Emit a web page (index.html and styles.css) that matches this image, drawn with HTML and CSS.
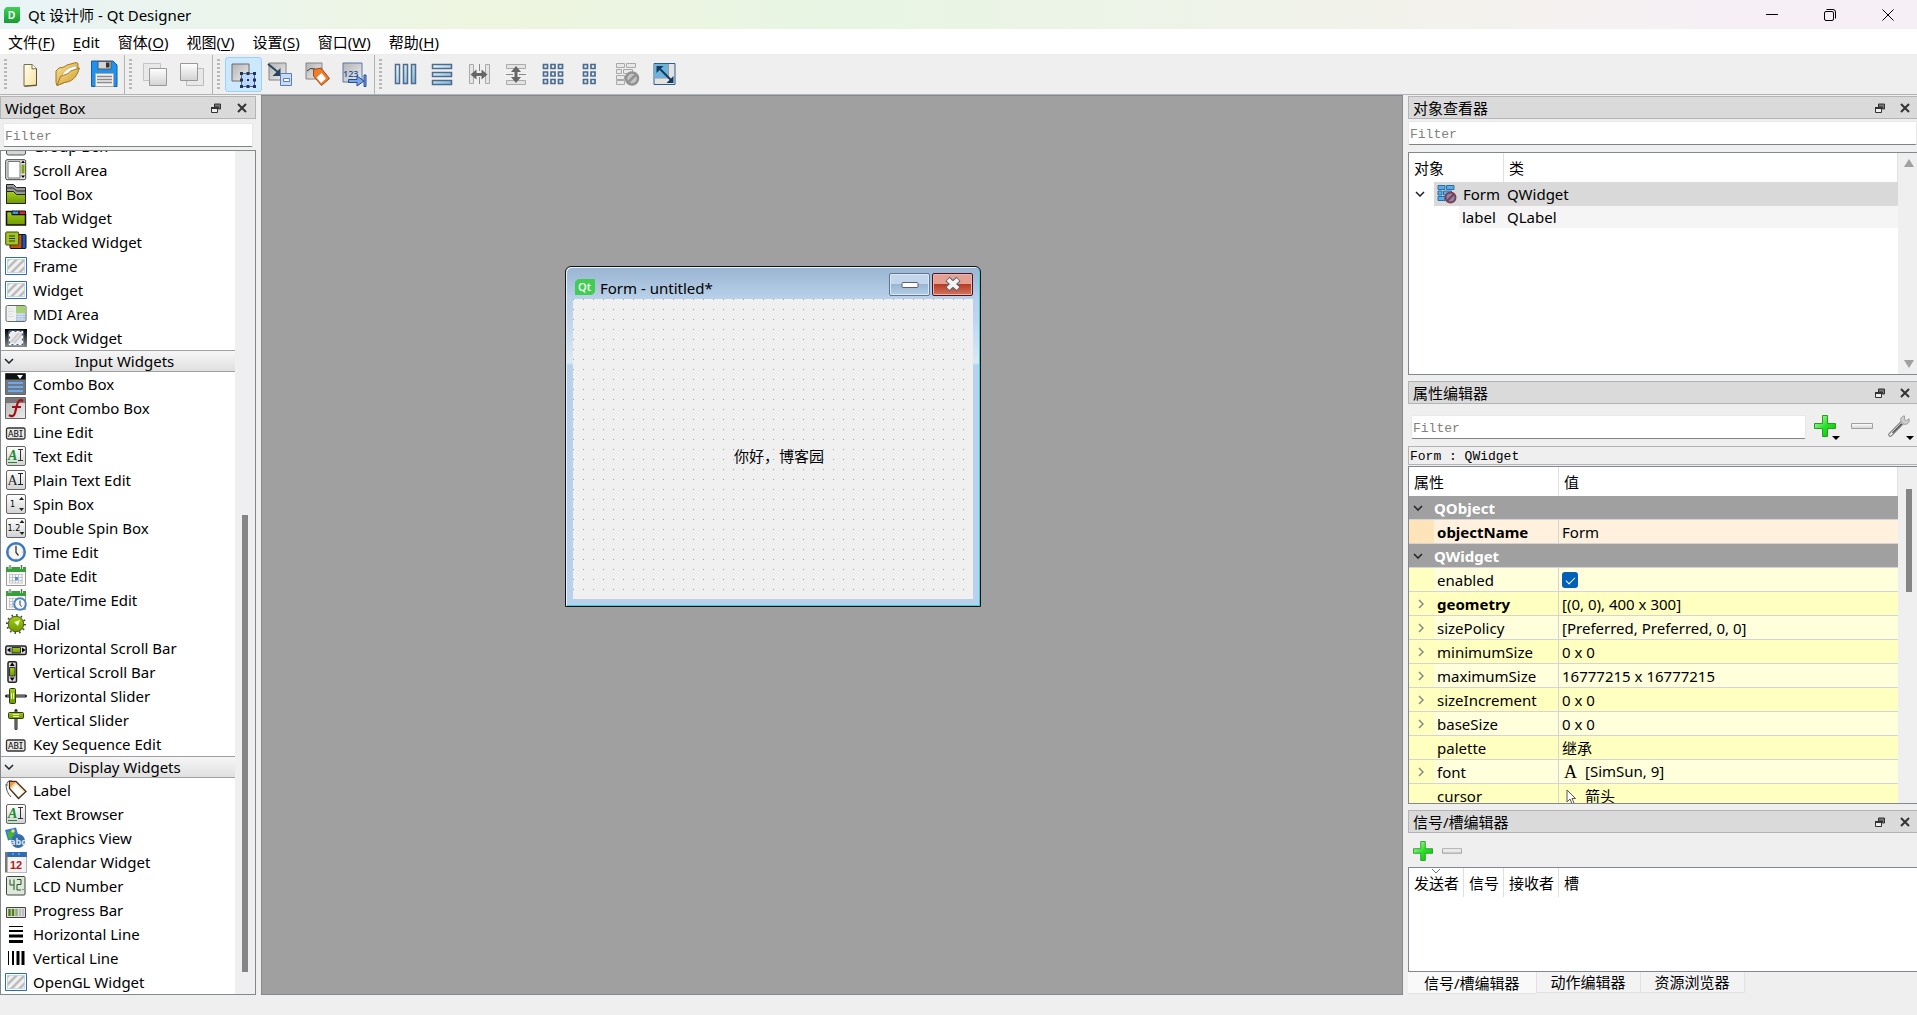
FILE: index.html
```html
<!DOCTYPE html>
<html lang="zh-CN">

<head>
  <meta charset="UTF-8">
  <meta name="viewport" content="width=device-width, initial-scale=1.0">
  <title>Qt 设计师 - Qt Designer</title>
  <link rel="stylesheet" href="styles.css">
</head>

<body>
  <!-- icon fills -->
  <svg class="paints" aria-hidden="true">
    <defs>
      <linearGradient id="g-grey" x1="0" y1="0" x2="1" y2="1"><stop offset="0" stop-color="#b4b4b4"/><stop offset="1" stop-color="#ededed"/></linearGradient>
      <linearGradient id="g-light" x1="0" y1="0" x2="0" y2="1"><stop offset="0" stop-color="#fff"/><stop offset="1" stop-color="#d2d2d2"/></linearGradient>
      <linearGradient id="g-blue" x1="0" y1="0" x2="1" y2="1"><stop offset="0" stop-color="#eef9ff"/><stop offset="1" stop-color="#7db9dc"/></linearGradient>
      <linearGradient id="g-green" x1="0" y1="0" x2="0" y2="1"><stop offset="0" stop-color="#a4cc1c"/><stop offset="1" stop-color="#6f9a00"/></linearGradient>
      <linearGradient id="g-plus" x1="0" y1="0" x2="1" y2="1"><stop offset="0" stop-color="#d4ffc8"/><stop offset=".5" stop-color="#2be02b"/><stop offset="1" stop-color="#00c400"/></linearGradient>
      <linearGradient id="g-page" x1="0" y1="0" x2="1" y2="1"><stop offset="0" stop-color="#fffef2"/><stop offset="1" stop-color="#f4e39b"/></linearGradient>
      <linearGradient id="g-gold" x1="0" y1="0" x2="1" y2="1"><stop offset="0" stop-color="#fce497"/><stop offset="1" stop-color="#c99422"/></linearGradient>
      <linearGradient id="g-logo" x1="0" y1="0" x2="0" y2="1"><stop offset="0" stop-color="#3fd058"/><stop offset="1" stop-color="#189a30"/></linearGradient>
      <linearGradient id="g-dark" x1="0" y1="0" x2="0" y2="1"><stop offset="0" stop-color="#000"/><stop offset="1" stop-color="#888"/></linearGradient>
      <pattern id="p-stripe" width="8" height="8" patternUnits="userSpaceOnUse"><rect width="8" height="8" fill="#f1f1f1"/><path d="M-2 10L10-2M-6 6L6-6M2 14L14 2" stroke="#bdbdbd" stroke-width="2.600"/></pattern>
    </defs>
  </svg>

  <!-- icons -->
  <svg class="sprite" aria-hidden="true">
    <!-- tool bar, 28 x 28 -->
    <symbol id="t-new" viewBox="0 0 28 28"><path d="M8 4.500h8l4.500 4v16.500l-12.500 1z" fill="url(#g-page)" stroke="#7b6d48"/><path d="M16 4.500v4.500l4.500-.5" fill="#fff" stroke="#7b6d48"/><path d="M20.500 9v16.500l-12 .8" fill="none" stroke="#5b4f32"/></symbol>
    <symbol id="t-open" viewBox="0 0 28 28"><path d="M3 11l3-3 5-1 3-2 9-2.500 2 1v7l-9 10-12 5-1-3z" fill="url(#g-gold)" stroke="#a37820"/><path d="M9 16c2-6 8-9 14-10l1.500 5-8 8-8 3z" fill="#fff" stroke="#c9c0a4"/><path d="M4 25.500l3.500-9c4-2 8-2 10-5.500l9-3-2 5c-3 7-8 9-13 9.500z" fill="url(#g-gold)" stroke="#a37820"/></symbol>
    <symbol id="t-save" viewBox="0 0 28 28"><path d="M1.500 1h21.500l4 4v21.500h-25.500z" fill="#1c93f0" stroke="#1a5c9c"/><path d="M8 1.500h13v7.500h-13z" fill="#d4d4d4" stroke="#555"/><path d="M16 2.500h3.500v5h-3.500z" fill="#333"/><path d="M5.500 13.500h18v13h-18z" fill="#f2f2f2" stroke="#aaa"/><path d="M7 16.500h15M7 19.500h15M7 22.500h15" stroke="#8a8a8a" stroke-width="1.500"/></symbol>
    <symbol id="t-front" viewBox="0 0 28 28"><path d="M2.500 3.500h17v17h-17z" fill="#e8e8e8" stroke="#c4c4c4"/><path d="M8.500 8.500h17v17h-17z" fill="url(#g-light)" stroke="#999"/></symbol>
    <symbol id="t-back" viewBox="0 0 28 28"><path d="M8.500 8.500h17v17h-17z" fill="#e8e8e8" stroke="#bbb"/><path d="M2.500 3.500h17v17h-17z" fill="url(#g-light)" stroke="#999"/></symbol>
    <symbol id="t-widget" viewBox="0 0 28 28"><path d="M3 4h17v17h-17z" fill="url(#g-grey)" stroke="#6d6d6d"/><path d="M12.500 13.500h13v13h-13z" fill="#bcd6ff" stroke="#4a6fae"/><path d="M11 12h3v3h-3zM17.500 12h3v3h-3zM24 12h3v3h-3zM11 18.500h3v3h-3zM24 18.500h3v3h-3zM11 25h3v3h-3zM17.500 25h3v3h-3zM24 25h3v3h-3z" fill="#23344f"/><path d="M18 19h2v2h-2z" fill="#23344f"/></symbol>
    <symbol id="t-signal" viewBox="0 0 28 28"><path d="M3 3h17v17h-17z" fill="url(#g-grey)" stroke="#858585"/><path d="M2 4l11 9" stroke="#27465e" stroke-width="2"/><path d="M14.500 8v8h-8z" fill="#27465e"/><path d="M14.500 13.500h11v12h-11z" fill="#c5dcff" stroke="#5b7db3"/><path d="M17.500 18.500h6v3h-6z" fill="#fff" stroke="#5b7db3"/></symbol>
    <symbol id="t-buddy" viewBox="0 0 28 28"><path d="M3 3h16v16h-16z" fill="url(#g-grey)" stroke="#858585"/><path d="M4 11q3-4 8-2" fill="none" stroke="#333"/><path d="M10.500 9.500l7.500-1.500 8.500 10.500-8 7-8-9.500z" fill="#f27a2b" stroke="#9b4a18"/><path d="M18.500 13l4.500 5.500-5 4.500-4.500-5.500z" fill="#fff"/></symbol>
    <symbol id="t-tab" viewBox="0 0 28 28"><path d="M3 3h19v19h-19z" fill="url(#g-grey)" stroke="#5d77a8"/><text x="3" y="17" class="t-123">123</text><path d="M8.500 19.500h8.500v-3.500l7 5-7 5v-3.500h-8.500zM24 15h2v11.500h-2z" fill="#78a7ec" stroke="#264b90"/></symbol>
    <symbol id="t-hlay" viewBox="0 0 28 28"><path d="M4.500 4.500h4v19h-4zM12.500 4.500h4v19h-4zM20.500 4.500h4v19h-4z" fill="url(#g-blue)" stroke="#4e6a8c" stroke-width="1.500"/></symbol>
    <symbol id="t-vlay" viewBox="0 0 28 28"><path d="M4.500 4.500h19v4h-19zM4.500 12.500h19v4h-19zM4.500 20.500h19v4h-19z" fill="url(#g-blue)" stroke="#4e6a8c" stroke-width="1.500"/></symbol>
    <symbol id="t-hsplit" viewBox="0 0 28 28"><path d="M4.500 4.500h4v19h-4zM20.500 4.500h4v19h-4z" fill="#e4e4e4" stroke="#aaa"/><path d="M14.500 4v20" stroke="#888" stroke-dasharray="7 6"/><path d="M5.500 14.500l6-5v3.500h5v-3.500l6 5-6 5v-3.500h-5v3.500z" fill="#666"/></symbol>
    <symbol id="t-vsplit" viewBox="0 0 28 28"><path d="M4.500 4.500h19v4h-19zM4.500 20.500h19v4h-19z" fill="#e4e4e4" stroke="#aaa"/><path d="M4 14.500h20" stroke="#888" stroke-dasharray="7 6"/><path d="M14 6l5 6h-3.500v5h3.500l-5 6-5-6h3.500v-5h-3.500z" fill="#666"/></symbol>
    <symbol id="t-grid" viewBox="0 0 28 28"><path d="M4.500 4.500h4v4h-4zM12 4.500h4v4h-4zM19.500 4.500h4v4h-4zM4.500 12h4v4h-4zM12 12h4v4h-4zM19.500 12h4v4h-4zM4.500 19.500h4v4h-4zM12 19.500h4v4h-4zM19.500 19.500h4v4h-4z" fill="#d9f0fc" stroke="#4e6a8c" stroke-width="1.700"/></symbol>
    <symbol id="t-form" viewBox="0 0 28 28"><path d="M7.500 4.500h4v4h-4zM15 4.500h4v4h-4zM7.500 12h4v4h-4zM15 12h4v4h-4zM7.500 19.500h4v4h-4zM15 19.500h4v4h-4z" fill="#d9f0fc" stroke="#4e6a8c" stroke-width="1.700"/></symbol>
    <symbol id="t-break" viewBox="0 0 28 28"><path d="M3.500 3.500h8v4h-8zM13.500 3.500h9v4h-9zM3.500 9.500h5v4h-5zM10.500 9.500h9v4h-9zM3.500 15.500h8v4h-8zM3.500 20.500h8v4h-8z" fill="#e8e8e8" stroke="#a8a8a8"/><circle cx="19" cy="18.500" r="6" fill="#c4c4c4" stroke="#929292" stroke-width="2.500"/><path d="M15 22.500l8-8" stroke="#929292" stroke-width="2.500"/></symbol>
    <symbol id="t-adjust" viewBox="0 0 28 28"><path d="M4 3.500h21v21h-21z" fill="#e3e3e3" stroke="#2d5d8f"/><path d="M4.500 4h14v14h-14z" fill="#6db4dc"/><path d="M18.500 4v14h-14" fill="none" stroke="#99a"/><path d="M9 8l12 12" stroke="#123a5e" stroke-width="2"/><path d="M6.500 6h7l-7 7zM23.500 23h-7l7-7z" fill="#123a5e"/></symbol>

    <!-- panel controls -->
    <symbol id="c-float" viewBox="0 0 10 10"><path d="M3.500 1h6v5h-2v-2h-4z" fill="#777" stroke="#333"/><path d="M.5 4.500h6v5h-6z" fill="#eee" stroke="#333"/><path d="M0 4h7v2h-7z" fill="#333"/></symbol>
    <symbol id="c-close" viewBox="0 0 10 10"><path d="M1 1l8 8M9 1l-8 8" stroke="#333" stroke-width="2"/></symbol>
    <symbol id="c-down" viewBox="0 0 10 6"><path d="M1 1l4 4 4-4" fill="none" stroke="#222" stroke-width="1.500"/></symbol>
    <symbol id="c-right" viewBox="0 0 6 10"><path d="M1 1l4 4-4 4" fill="none" stroke="#888" stroke-width="1.500"/></symbol>
    <symbol id="c-plus" viewBox="0 0 22 22"><path d="M8.500.5h5v8h8v5h-8v8h-5v-8h-8v-5h8z" fill="url(#g-plus)" stroke="#2a9c22"/></symbol>
    <symbol id="c-minus" viewBox="0 0 22 22"><path d="M.5 8.500h21v5h-21z" fill="url(#g-light)" stroke="#a0a0a0"/></symbol>
    <symbol id="c-wrench" viewBox="0 0 24 24"><path d="M2.500 21.500L16 8" stroke="#777" stroke-width="4.500" stroke-linecap="round"/><path d="M2.500 21.500L16 8" stroke="#e8e8e8" stroke-width="2.500" stroke-linecap="round"/><path d="M5 19.500L15 9.500" stroke="#444" stroke-width="1.500"/><path d="M14 7c-1-3 1-6 4-6v4l2 1 3-2c1 4-2 7-6 6z" fill="#ccc" stroke="#999"/></symbol>

    <!-- widget box, 22 x 22 -->
    <symbol id="w-group" viewBox="0 0 22 22"><rect x="1.500" y="3" width="19" height="17" rx="2" fill="#d5d5d5" stroke="#555"/></symbol>
    <symbol id="w-scroll" viewBox="0 0 22 22"><rect x=".7" y=".7" width="20" height="20" rx="1.500" fill="#e7e7e7" stroke="#444"/><path d="M3 2.500h12v16.500h-12z" fill="#fff" stroke="#777"/><path d="M16.500 5.500h3v9h-3z" fill="#7da50a"/><path d="M16 4h4l-2-2.500zM16 16.500h4l-2 2.500z"/></symbol>
    <symbol id="w-toolbox" viewBox="0 0 22 22"><path d="M1.500 1.500h7l3 3h9v16h-19z" fill="#9a9a9a" stroke="#222"/><path d="M1.500 5h7l3 3h9" fill="none" stroke="#222"/><path d="M1.500 8.500h7l3 3h9v9h-19z" fill="url(#g-green)" stroke="#222"/></symbol>
    <symbol id="w-tab" viewBox="0 0 22 22"><path d="M1.500 4.500h6v3h13v10.500h-19z" fill="url(#g-green)" stroke="#111" stroke-width="1.500"/><path d="M7 4h7v3.500h-7z" fill="#3a9ae8" stroke="#111"/><path d="M14 4h6.500v3.500h-6.500z" fill="#e02a1a" stroke="#111"/></symbol>
    <symbol id="w-stack" viewBox="0 0 22 22"><rect x="9" y="3.500" width="12" height="14" rx="1" fill="#1c57c0" stroke="#111"/><rect x="5" y="3.500" width="12" height="14" rx="1" fill="#c4531a" stroke="#111"/><rect x=".7" y="1" width="13" height="13" rx="1" fill="#a3c32a" stroke="#3b4a00"/><path d="M4 5h6M4 7.500h6M4 10h6" stroke="#274000"/></symbol>
    <symbol id="w-frame" viewBox="0 0 22 22"><path d="M.5 2.500h21v17h-21z" fill="#fff" stroke="#2b6cc0"/><path d="M2.500 4.500h17v13h-17z" fill="url(#p-stripe)" stroke="#9abce0" stroke-width=".5"/></symbol>
    <symbol id="w-mdi" viewBox="0 0 22 22"><rect x="1" y="2.500" width="20" height="16" rx="1.500" fill="#f0f0f0" stroke="#666"/><path d="M11 3h9.500v7.500h-9.500z" fill="#a5cf7b"/><path d="M11 11.500h9v6.500h-9z" fill="#9bc3ff"/><path d="M11 13.500h9M11 16h9M14 11v7M17 11v7M3 6h4M3 8.500h6M3 11h4M3 13.500h6" stroke="#ddd"/></symbol>
    <symbol id="w-dock" viewBox="0 0 22 22"><path d="M0 2h22v18h-22z" fill="url(#g-dark)"/><path d="M4.500 4.500h13v13h-13z" fill="#ebebeb" stroke="#fff" stroke-width="1.500"/><path d="M6 15l8-9M9 16l8-9" stroke="#ccc" stroke-width="2"/><path d="M4.500 4.500h13v13h-13z" fill="none" stroke="#2563b0" stroke-width="1.200" stroke-dasharray="2 3"/></symbol>
    <symbol id="w-combo" viewBox="0 0 22 22"><path d="M.5.500h20v21h-20z" fill="#6f7780" stroke="#666"/><path d="M.5.500h20v6h-20z" fill="#111"/><path d="M12 2h6l-3 4z" fill="#fff"/><path d="M3 10h15M3 14h15M3 18h15" stroke="#6ea8ec" stroke-width="2"/></symbol>
    <symbol id="w-font" viewBox="0 0 22 22"><path d="M.5.500h20v21h-20z" fill="url(#g-grey)" stroke="#666"/><path d="M1 1h19v5h-19z" fill="#777"/><path d="M18 4c-3-2-5 0-6 4l-2 8c-1 3-3 4-6 2M7 10h9" fill="none" stroke="#a30f14" stroke-width="2.200"/></symbol>
    <symbol id="w-line" viewBox="0 0 22 22"><rect x="1.500" y="7" width="18.500" height="11" rx="1.500" fill="#e8e8e8" stroke="#333" stroke-width="1.300"/><text x="3" y="15.500" class="i-abi">AB</text><path d="M14.500 9.500h3M14.500 15.500h3M16 9.500v6" stroke="#222"/></symbol>
    <symbol id="w-text" viewBox="0 0 22 22"><rect x="1.500" y="1.500" width="19" height="19" rx="1.500" fill="url(#g-light)" stroke="#666"/><text x="3" y="15" class="i-a i-green">A</text><path d="M3 17.500h9" stroke="#1b8a2e"/><path d="M13 4.500h5M13 15.500h5M15.500 4.500v11" stroke="#333"/></symbol>
    <symbol id="w-plain" viewBox="0 0 22 22"><rect x="1.500" y="1.500" width="19" height="19" rx="1.500" fill="url(#g-light)" stroke="#666"/><text x="2.500" y="16" class="i-a">A</text><path d="M13 4.500h5M13 15.500h5M15.500 4.500v11" stroke="#222"/></symbol>
    <symbol id="w-spin" viewBox="0 0 22 22"><rect x="1.500" y="1.500" width="19" height="19" rx="1.500" fill="url(#g-light)" stroke="#666"/><text x="5" y="14" class="i-num">1</text><path d="M14 7h5l-2.500-3zM14 15h5l-2.500 3z" fill="#222"/></symbol>
    <symbol id="w-dspin" viewBox="0 0 22 22"><rect x="1.500" y="1.500" width="19" height="19" rx="1.500" fill="url(#g-light)" stroke="#666"/><text x="2.500" y="14" class="i-num">1.2</text><path d="M14.500 6h5l-2.500-3zM14.500 15h5l-2.500 3z" fill="#222"/></symbol>
    <symbol id="w-time" viewBox="0 0 22 22"><circle cx="11" cy="11" r="8.800" fill="#f7f7f2" stroke="#3b78c0" stroke-width="2.400"/><path d="M11 5v6.500l2.500 3" fill="none" stroke="#333" stroke-width="1.300"/><path d="M11 3v1.500M11 17.500v1.500M3 11h1.500M17.500 11h1.500" stroke="#888"/></symbol>
    <symbol id="w-date" viewBox="0 0 22 22"><path d="M1.500 2.500h19v18h-19z" fill="#fafafa" stroke="#999"/><path d="M1 2h20v5h-20z" fill="#36a136"/><path d="M5 0v4M16.500 0v4" stroke="#ddd" stroke-width="3"/><path d="M5 0v4M16.500 0v4" stroke="#666"/><path d="M4 9.500h14M4 12.500h14M4 15.500h14M4 18h14M4.500 9v9M7.500 9v9M10.500 9v9M13.500 9v9M17 9v9" stroke="#c2c6ca"/><path d="M10 12h3v3h-3z" fill="#4f8ee0"/></symbol>
    <symbol id="w-datetime" viewBox="0 0 22 22"><path d="M1.500 2.500h19v18h-19z" fill="#fafafa" stroke="#999"/><path d="M1 2h20v5h-20z" fill="#36a136"/><path d="M5 0v4M16.500 0v4" stroke="#ddd" stroke-width="3"/><path d="M5 0v4M16.500 0v4" stroke="#666"/><path d="M4 9.500h14M4 12.500h14M4 15.500h14M4 18h14M4.500 9v9M7.500 9v9M10.500 9v9M13.500 9v9" stroke="#c2c6ca"/><circle cx="15" cy="15" r="5.800" fill="#f4f8fc" stroke="#4d83c0" stroke-width="2"/><path d="M15 11.500v4l1.500 2" fill="none" stroke="#333"/></symbol>
    <symbol id="w-dial" viewBox="0 0 22 22"><circle cx="11" cy="11" r="9" fill="none" stroke="#444" stroke-width="2" stroke-dasharray="1.500 3.200"/><circle cx="11" cy="11" r="7.700" fill="url(#g-green)" stroke="#44610a"/><path d="M15 7l-2 6-4-4z" fill="#e9ffc0"/></symbol>
    <symbol id="w-hscroll" viewBox="0 0 22 22"><rect x=".8" y="9" width="20.400" height="8.500" rx="1.500" fill="#ddd" stroke="#222" stroke-width="1.500"/><path d="M7 10.500h8.500v5.500h-8.500z" fill="url(#g-green)" stroke="#333"/><path d="M5.500 10.500v5l-3.500-2.500zM17 10.500v5l3.500-2.500z"/></symbol>
    <symbol id="w-vscroll" viewBox="0 0 22 22"><rect x="3" y=".8" width="8.500" height="20.400" rx="1.500" fill="#ddd" stroke="#222" stroke-width="1.500"/><path d="M4.500 6.500h5.500v8.500h-5.500z" fill="url(#g-green)" stroke="#333"/><path d="M4.700 5h5l-2.500-3.500zM4.700 16.500h5l-2.500 3.500z"/></symbol>
    <symbol id="w-hslider" viewBox="0 0 22 22"><path d="M1.500 11h19" stroke="#222" stroke-width="3" stroke-linecap="round"/><path d="M2 11h18" stroke="#aaa"/><rect x="4.500" y="3.500" width="6" height="15" rx="1" fill="url(#g-green)" stroke="#2b3d00"/><path d="M6.500 8v6M8.500 8v6" stroke="#e8ffb0"/></symbol>
    <symbol id="w-vslider" viewBox="0 0 22 22"><path d="M11 1.500v18" stroke="#222" stroke-width="3" stroke-linecap="round"/><path d="M11 2v18" stroke="#999"/><rect x="3.500" y="3.500" width="15" height="6" rx="1" fill="url(#g-green)" stroke="#2b3d00"/><path d="M8 5.500h6M8 7.500h6" stroke="#e8ffb0"/></symbol>
    <symbol id="w-label" viewBox="0 0 22 22"><path d="M2 7q-1-6 5-5M1 5q0 8 5 13" fill="none" stroke="#555"/><path d="M4.500 2.500h6.500l10 10-7.500 7-9-10z" fill="#fbe3c6" stroke="#4a2f18" stroke-width="1.300"/><path d="M5 3h6l-6 6z" fill="#f29c4a"/><path d="M11 6l7.500 7-5 4.500-7-7.500z" fill="#fff"/></symbol>
    <symbol id="w-graphics" viewBox="0 0 22 22"><path d="M0 3l11-2.500 3 10-11 3z" fill="#2f7be0"/><path d="M2 5l4-1 6 6-8 2z" fill="#49b52f"/><circle cx="8" cy="4" r="1.800" fill="#ffe23c"/><circle cx="13" cy="14" r="7" fill="#356da8"/><text x="5" y="18" class="i-abc">abc</text></symbol>
    <symbol id="w-calendar" viewBox="0 0 22 22"><path d="M0 1h22v20.500h-22z" fill="#777"/><path d="M2.500 6h19v15h-19z" fill="#f3f3f3"/><path d="M2.500 1h19v5h-19z" fill="#2e6cb5"/><path d="M7 3h2M13 3h2" stroke="#9cc4f0"/><text x="5" y="18" class="i-12">12</text></symbol>
    <symbol id="w-lcd" viewBox="0 0 22 22"><rect x="1.500" y="1.500" width="18.500" height="18.500" rx="1" fill="#dce8d8" stroke="#444"/><path d="M5 4.500v5.500h4M9 4.500v10.500M12 4.500h4v5h-4v5.500h4M17.500 14.500h1" fill="none" stroke="#28502c"/></symbol>
    <symbol id="w-progress" viewBox="0 0 22 22"><path d="M1.500 8.500h19v10h-19z" fill="#ddd" stroke="#444"/><path d="M4.500 10v7M8 10v7" stroke="#4f8016" stroke-width="2.500"/><path d="M11.500 10v7" stroke="#8cab70" stroke-width="2.500"/><path d="M15 10v7M18 10v7" stroke="#bbb" stroke-width="2"/></symbol>
    <symbol id="w-hline" viewBox="0 0 22 22"><path d="M4 3.500h14" stroke="#000"/><path d="M4 8h14" stroke="#000" stroke-width="2"/><path d="M4 13h14" stroke="#000" stroke-width="3"/><path d="M4 18.500h14" stroke="#000" stroke-width="3"/></symbol>
    <symbol id="w-vline" viewBox="0 0 22 22"><path d="M3.500 4v14" stroke="#000"/><path d="M8 4v14" stroke="#000" stroke-width="2"/><path d="M13 4v14" stroke="#000" stroke-width="3"/><path d="M18 4v14" stroke="#000" stroke-width="3"/></symbol>
    <symbol id="o-form" viewBox="0 0 22 22"><path d="M2 2.500h7v4h-7zM10.500 2.500h7.500v4h-7.500zM2 8h4v4h-4zM7.500 8h8v4h-8zM2 13.500h7v4h-7z" fill="#5aaee8" stroke="#2d6ca5"/><circle cx="14.500" cy="14.500" r="5" fill="#8c87a8" stroke="#7a3f55" stroke-width="2"/><path d="M11 18l7-7" stroke="#7a3f55" stroke-width="2"/></symbol>
  </svg>

  <!-- title bar -->
  <header class="titlebar">
    <svg class="app-icon" viewBox="0 0 16 16" aria-hidden="true"><path d="M2.500 0h13.500v13.500l-2.500 2.500h-13.500v-13.500z" fill="url(#g-logo)"/><text x="4" y="12" class="app-icon-d">D</text></svg>
    <h1 class="titlebar-ttl">Qt 设计师 - Qt Designer</h1>
    <div class="titlebar-btns">
      <button type="button" class="win-btn" aria-label="最小化"><svg viewBox="0 0 12 12"><path d="M0 5.500h12" stroke="#000"/></svg></button>
      <button type="button" class="win-btn" aria-label="还原"><svg viewBox="0 0 12 12"><rect x=".5" y="2.500" width="9" height="9" rx="1.500" fill="none" stroke="#000"/><path d="M2.500.5h6.500a2.500 2.500 0 0 1 2.500 2.500v6.500" fill="none" stroke="#000"/></svg></button>
      <button type="button" class="win-btn" aria-label="关闭"><svg viewBox="0 0 12 12"><path d="M.5.500l11 11M11.500.5l-11 11" stroke="#000"/></svg></button>
    </div>
  </header>

  <!-- menu -->
  <nav class="menubar">
    <button type="button">文件(<u>F</u>)</button>
    <button type="button"><u>E</u>dit</button>
    <button type="button">窗体(<u>O</u>)</button>
    <button type="button">视图(<u>V</u>)</button>
    <button type="button">设置(<u>S</u>)</button>
    <button type="button">窗口(<u>W</u>)</button>
    <button type="button">帮助(<u>H</u>)</button>
  </nav>

  <!-- tool bars -->
  <div class="toolbars">
    <div class="toolbar">
      <span class="toolbar-grip"></span>
      <button type="button" class="tool" aria-label="新建"><svg><use href="#t-new"/></svg></button>
      <button type="button" class="tool" aria-label="打开"><svg><use href="#t-open"/></svg></button>
      <button type="button" class="tool" aria-label="保存"><svg><use href="#t-save"/></svg></button>
    </div>
    <div class="toolbar">
      <span class="toolbar-grip"></span>
      <button type="button" class="tool" aria-label="放到前面"><svg><use href="#t-front"/></svg></button>
      <button type="button" class="tool" aria-label="放到后面"><svg><use href="#t-back"/></svg></button>
    </div>
    <div class="toolbar">
      <span class="toolbar-grip"></span>
      <button type="button" class="tool is-active" aria-label="编辑控件"><svg><use href="#t-widget"/></svg></button>
      <button type="button" class="tool" aria-label="编辑信号/槽"><svg><use href="#t-signal"/></svg></button>
      <button type="button" class="tool" aria-label="编辑伙伴"><svg><use href="#t-buddy"/></svg></button>
      <button type="button" class="tool" aria-label="编辑Tab顺序"><svg><use href="#t-tab"/></svg></button>
    </div>
    <div class="toolbar toolbar-last">
      <span class="toolbar-grip"></span>
      <button type="button" class="tool" aria-label="水平布局"><svg><use href="#t-hlay"/></svg></button>
      <button type="button" class="tool" aria-label="垂直布局"><svg><use href="#t-vlay"/></svg></button>
      <button type="button" class="tool" aria-label="水平分裂器布局"><svg><use href="#t-hsplit"/></svg></button>
      <button type="button" class="tool" aria-label="垂直分裂器布局"><svg><use href="#t-vsplit"/></svg></button>
      <button type="button" class="tool" aria-label="栅格布局"><svg><use href="#t-grid"/></svg></button>
      <button type="button" class="tool" aria-label="窗体布局"><svg><use href="#t-form"/></svg></button>
      <button type="button" class="tool" aria-label="打破布局"><svg><use href="#t-break"/></svg></button>
      <button type="button" class="tool" aria-label="调整大小"><svg><use href="#t-adjust"/></svg></button>
    </div>
  </div>

  <main class="workspace">
    <!-- widget box -->
    <section class="dock dock-left">
      <div class="dock-head">
        <h2>Widget Box</h2>
        <button type="button" aria-label="浮动"><svg><use href="#c-float"/></svg></button>
        <button type="button" aria-label="关闭"><svg><use href="#c-close"/></svg></button>
      </div>
      <input type="text" class="filter filter-box" placeholder="Filter" aria-label="Filter">
      <div class="pane widget-pane">
        <div class="widget-list">
          <ul>
            <li><svg><use href="#w-group"/></svg>Group Box</li>
            <li><svg><use href="#w-scroll"/></svg>Scroll Area</li>
            <li><svg><use href="#w-toolbox"/></svg>Tool Box</li>
            <li><svg><use href="#w-tab"/></svg>Tab Widget</li>
            <li><svg><use href="#w-stack"/></svg>Stacked Widget</li>
            <li><svg><use href="#w-frame"/></svg>Frame</li>
            <li><svg><use href="#w-frame"/></svg>Widget</li>
            <li><svg><use href="#w-mdi"/></svg>MDI Area</li>
            <li><svg><use href="#w-dock"/></svg>Dock Widget</li>
          </ul>
          <button type="button" class="category"><svg><use href="#c-down"/></svg><span>Input Widgets</span></button>
          <ul>
            <li><svg><use href="#w-combo"/></svg>Combo Box</li>
            <li><svg><use href="#w-font"/></svg>Font Combo Box</li>
            <li><svg><use href="#w-line"/></svg>Line Edit</li>
            <li><svg><use href="#w-text"/></svg>Text Edit</li>
            <li><svg><use href="#w-plain"/></svg>Plain Text Edit</li>
            <li><svg><use href="#w-spin"/></svg>Spin Box</li>
            <li><svg><use href="#w-dspin"/></svg>Double Spin Box</li>
            <li><svg><use href="#w-time"/></svg>Time Edit</li>
            <li><svg><use href="#w-date"/></svg>Date Edit</li>
            <li><svg><use href="#w-datetime"/></svg>Date/Time Edit</li>
            <li><svg><use href="#w-dial"/></svg>Dial</li>
            <li><svg><use href="#w-hscroll"/></svg>Horizontal Scroll Bar</li>
            <li><svg><use href="#w-vscroll"/></svg>Vertical Scroll Bar</li>
            <li><svg><use href="#w-hslider"/></svg>Horizontal Slider</li>
            <li><svg><use href="#w-vslider"/></svg>Vertical Slider</li>
            <li><svg><use href="#w-line"/></svg>Key Sequence Edit</li>
          </ul>
          <button type="button" class="category"><svg><use href="#c-down"/></svg><span>Display Widgets</span></button>
          <ul>
            <li><svg><use href="#w-label"/></svg>Label</li>
            <li><svg><use href="#w-text"/></svg>Text Browser</li>
            <li><svg><use href="#w-graphics"/></svg>Graphics View</li>
            <li><svg><use href="#w-calendar"/></svg>Calendar Widget</li>
            <li><svg><use href="#w-lcd"/></svg>LCD Number</li>
            <li><svg><use href="#w-progress"/></svg>Progress Bar</li>
            <li><svg><use href="#w-hline"/></svg>Horizontal Line</li>
            <li><svg><use href="#w-vline"/></svg>Vertical Line</li>
            <li><svg><use href="#w-frame"/></svg>OpenGL Widget</li>
          </ul>
        </div>
        <div class="scroll scroll-widgets"><span class="scroll-thumb"></span></div>
      </div>
    </section>

    <!-- form -->
    <section class="mdi">
      <div class="form-window">
        <div class="form-head">
          <svg class="form-logo" viewBox="0 0 20 16" aria-hidden="true"><path d="M3 0h17v13l-3 3h-17v-13z" fill="#41cd52"/><text x="3" y="12" class="form-logo-qt">Qt</text></svg>
          <span class="form-ttl">Form - untitled*</span>
          <button type="button" class="form-btn" aria-label="最小化"><svg viewBox="0 0 18 8"><rect x="1" y="1.500" width="16" height="5" rx="1" fill="#fff" stroke="#5a5f70"/></svg></button>
          <button type="button" class="form-btn form-btn-close" aria-label="关闭"><svg viewBox="0 0 18 16"><path d="M3.500 3l11 10M14.500 3l-11 10" stroke="#5a5f70" stroke-width="6"/><path d="M4 3.500l10 9M14 3.500l-10 9" stroke="#f4f4f4" stroke-width="4"/></svg></button>
        </div>
        <div class="form-canvas">
          <span class="form-label">你好，博客园</span>
        </div>
      </div>
    </section>

    <div class="side">
      <!-- object inspector -->
      <section class="dock dock-objects">
        <div class="dock-head">
          <h2>对象查看器</h2>
          <button type="button" aria-label="浮动"><svg><use href="#c-float"/></svg></button>
          <button type="button" aria-label="关闭"><svg><use href="#c-close"/></svg></button>
        </div>
        <input type="text" class="filter filter-objects" placeholder="Filter" aria-label="Filter">
        <div class="pane">
          <div class="pane-body">
            <table class="grid tree">
              <colgroup><col class="col-arrow"><col class="col-object"><col></colgroup>
              <thead>
                <tr><th colspan="2">对象</th><th>类</th></tr>
              </thead>
              <tbody>
                <tr class="is-selected">
                  <td class="tree-arrow"><svg class="arrow-down"><use href="#c-down"/></svg></td>
                  <td class="tree-name"><svg class="tree-icon"><use href="#o-form"/></svg>Form</td>
                  <td>QWidget</td>
                </tr>
                <tr class="tree-child">
                  <td></td>
                  <td><span>label</span></td>
                  <td>QLabel</td>
                </tr>
              </tbody>
            </table>
          </div>
          <div class="scroll scroll-arrows"><span class="scroll-up"></span><span class="scroll-down"></span></div>
        </div>
      </section>

      <!-- property editor -->
      <section class="dock dock-props">
        <div class="dock-head">
          <h2>属性编辑器</h2>
          <button type="button" aria-label="浮动"><svg><use href="#c-float"/></svg></button>
          <button type="button" aria-label="关闭"><svg><use href="#c-close"/></svg></button>
        </div>
        <div class="prop-tools">
          <input type="text" class="filter" placeholder="Filter" aria-label="Filter">
          <button type="button" class="has-menu" aria-label="添加"><svg><use href="#c-plus"/></svg></button>
          <button type="button" aria-label="删除"><svg><use href="#c-minus"/></svg></button>
          <button type="button" class="has-menu" aria-label="配置"><svg><use href="#c-wrench"/></svg></button>
        </div>
        <p class="prop-object">Form : QWidget</p>
        <div class="pane">
          <div class="pane-body">
            <table class="grid props">
              <colgroup><col class="col-arrow"><col class="col-prop"><col></colgroup>
              <thead>
                <tr><th colspan="2">属性</th><th>值</th></tr>
              </thead>
              <tbody>
                <tr class="group"><td><svg class="arrow-down"><use href="#c-down"/></svg></td><td colspan="2">QObject</td></tr>
                <tr class="orange is-changed"><td></td><td>objectName</td><td>Form</td></tr>
                <tr class="group"><td><svg class="arrow-down"><use href="#c-down"/></svg></td><td colspan="2">QWidget</td></tr>
                <tr><td></td><td>enabled</td><td><input type="checkbox" class="check" aria-label="enabled" checked></td></tr>
                <tr class="alt is-changed"><td><svg class="arrow-right"><use href="#c-right"/></svg></td><td>geometry</td><td>[(0, 0), 400 x 300]</td></tr>
                <tr><td><svg class="arrow-right"><use href="#c-right"/></svg></td><td>sizePolicy</td><td>[Preferred, Preferred, 0, 0]</td></tr>
                <tr class="alt"><td><svg class="arrow-right"><use href="#c-right"/></svg></td><td>minimumSize</td><td>0 x 0</td></tr>
                <tr><td><svg class="arrow-right"><use href="#c-right"/></svg></td><td>maximumSize</td><td>16777215 x 16777215</td></tr>
                <tr class="alt"><td><svg class="arrow-right"><use href="#c-right"/></svg></td><td>sizeIncrement</td><td>0 x 0</td></tr>
                <tr><td><svg class="arrow-right"><use href="#c-right"/></svg></td><td>baseSize</td><td>0 x 0</td></tr>
                <tr class="alt"><td></td><td>palette</td><td>继承</td></tr>
                <tr><td><svg class="arrow-right"><use href="#c-right"/></svg></td><td>font</td><td><span class="value-icon value-font">A</span>[SimSun, 9]</td></tr>
                <tr class="alt"><td></td><td>cursor</td><td><span class="value-icon"><svg viewBox="0 0 10 16"><path d="M1 1v12l3-3 2 5 2-1-2-4.500h3.500z" fill="#fff" stroke="#555"/></svg></span>箭头</td></tr>
              </tbody>
            </table>
          </div>
          <div class="scroll scroll-props"><span class="scroll-thumb"></span></div>
        </div>
      </section>

      <!-- signal / slot editor -->
      <section class="dock dock-signals">
        <div class="dock-head">
          <h2>信号/槽编辑器</h2>
          <button type="button" aria-label="浮动"><svg><use href="#c-float"/></svg></button>
          <button type="button" aria-label="关闭"><svg><use href="#c-close"/></svg></button>
        </div>
        <div class="signal-tools">
          <button type="button" aria-label="添加"><svg><use href="#c-plus"/></svg></button>
          <button type="button" aria-label="删除"><svg><use href="#c-minus"/></svg></button>
        </div>
        <div class="pane">
          <div class="pane-body">
            <table class="grid signals">
              <colgroup><col class="col-sender"><col class="col-signal"><col class="col-sender"><col></colgroup>
              <thead>
                <tr><th class="is-sorted">发送者<svg class="sort-mark" viewBox="0 0 10 6"><path d="M1 1l4 4 4-4" fill="none" stroke="#777"/></svg></th><th>信号</th><th>接收者</th><th>槽</th></tr>
              </thead>
            </table>
          </div>
        </div>
        <div class="tabs">
          <button type="button" class="tab is-active">信号/槽编辑器</button>
          <button type="button" class="tab">动作编辑器</button>
          <button type="button" class="tab">资源浏览器</button>
        </div>
      </section>
    </div>
  </main>
  <footer class="statusbar"></footer>
</body>

</html>
```

FILE: styles.css
```css
* {
  box-sizing: border-box;
}

body {
  display: flex;
  flex-direction: column;
  height: 100vh;
  margin: 0;
  overflow: hidden;
  font-family: "Noto Sans", "Noto Sans CJK SC", sans-serif;
  font-size: 15px;
  line-height: 20px;
  color: #000;
  background: #efefef;
}

h1,
h2,
p,
ul {
  margin: 0;
  padding: 0;
  font-size: 15px;
  font-weight: 400;
  list-style: none;
}

button {
  display: flex;
  align-items: center;
  justify-content: center;
  margin: 0;
  padding: 0;
  font: inherit;
  color: inherit;
  background: none;
  border: none;
}

svg {
  flex: none;
  display: block;
}

.paints {
  position: absolute;
  width: 0;
  height: 0;
}

.sprite {
  display: none;
}

/* icon letters */
.t-123 {
  font: 600 9px "Open Sans", sans-serif;
  fill: #25529c;
}

.i-abi {
  font: 8px "DejaVu Sans", sans-serif;
}

.i-a {
  font: 14px "Liberation Serif", serif;
  fill: #222;
}

.i-green {
  font-weight: 700;
  font-style: italic;
  fill: #1b8a2e;
}

.i-num {
  font: 8px "DejaVu Sans", sans-serif;
}

.i-abc {
  font: 700 9px "Open Sans", sans-serif;
  fill: #e0e8f0;
}

.i-12 {
  font: 700 11px "Liberation Sans", sans-serif;
  fill: #b51a1a;
}

.app-icon-d {
  font: 700 10px "Liberation Sans", sans-serif;
  fill: #fff;
}

.form-logo-qt {
  font: 600 11px "Open Sans", sans-serif;
  fill: #fff;
}

/* title bar */
.titlebar {
  flex: none;
  display: flex;
  align-items: center;
  height: 29px;
  padding-left: 4px;
  background: linear-gradient(90deg, #e8f4f6, #eef5e0 25%, #e8f5e4 45%, #f3f2ec 75%, #f6f0f6 90%);
}

.app-icon {
  width: 16px;
  height: 16px;
}

.titlebar-ttl {
  flex: 1;
  padding-left: 8px;
}

.titlebar-btns {
  display: flex;
}

.win-btn {
  width: 58px;
  height: 29px;
}

.win-btn svg {
  width: 12px;
  height: 12px;
}

/* menu */
.menubar {
  flex: none;
  display: flex;
  gap: 2px;
  height: 26px;
  background: #fff;
  border-bottom: 1px solid #ececec;
}

.menubar button {
  padding: 0 8px;
}

.menubar u {
  text-underline-offset: 2px;
}

/* tool bars */
.toolbars {
  flex: none;
  display: flex;
  height: 40px;
  border-bottom: 1px solid #b4b4b4;
}

.toolbar {
  display: flex;
  align-items: center;
  padding: 0 1px 0 4px;
  border-right: 1px solid #b4b4b4;
}

.toolbar-last {
  border-right: none;
}

.toolbar-grip {
  width: 3px;
  height: 32px;
  margin-right: 5px;
  background: repeating-linear-gradient(#b8b8b8 0 2px, transparent 2px 4px);
}

.tool {
  width: 37px;
  height: 35px;
  padding: 0 2px 1px 0;
}

.tool svg {
  width: 28px;
  height: 28px;
}

.tool.is-active {
  background: #cce8ff;
  border: 1px solid #99d1ff;
  border-radius: 3px;
}

/* workspace */
.workspace {
  flex: 1;
  display: flex;
  min-height: 0;
}

.side {
  flex: none;
  display: flex;
  flex-direction: column;
  gap: 6px;
  width: 509px;
  margin-left: 5px;
  padding-top: 1px;
}

.dock {
  display: flex;
  flex-direction: column;
  min-height: 0;
}

.dock-left {
  flex: none;
  width: 256px;
  margin-right: 5px;
  padding-top: 1px;
}

.dock-objects {
  flex: 279 1 0;
}

.dock-props {
  flex: 423 1 0;
}

.dock-signals {
  flex: 185 1 0;
}

.dock-head {
  flex: none;
  display: flex;
  align-items: center;
  height: 23px;
  padding: 0 0 0 4px;
  background: #dadada;
  border: 1px solid #b4b4b4;
}

.side .dock-head {
  border-right: none;
}

.dock-head h2 {
  flex: 1;
}

.dock-head button {
  width: 26px;
  height: 21px;
}

.side .dock-head button:last-child {
  width: 24px;
}

.dock-head svg {
  width: 10px;
  height: 10px;
}

.filter {
  flex: none;
  width: auto;
  height: 24px;
  padding: 2px 1px 0;
  font: 13px "Liberation Mono", monospace;
  background: #fff;
  border: 1px solid #e8e8e8;
  border-bottom-color: #828282;
  border-radius: 2px;
  outline: none;
}

.filter::placeholder {
  color: #808080;
  opacity: 1;
}

.filter-box {
  margin: 4px 3px 3px;
}

.filter-objects {
  margin: 2px 0 7px;
}

.pane {
  flex: 1;
  display: flex;
  min-height: 0;
  background: #fff;
  border: 1px solid #828790;
}

.side .pane {
  border-right: none;
}

.pane-body {
  flex: 1;
  overflow: hidden;
}

/* scroll bars */
.scroll {
  flex: none;
  display: grid;
  justify-items: center;
  width: 20px;
  background: #efefef;
}

.side .scroll {
  width: 19px;
  padding-left: 3px;
}

.scroll-thumb {
  grid-row: 2;
  width: 6px;
  background: #858585;
}

.scroll-widgets {
  grid-template-rows: 364fr 458fr 22fr;
}

.scroll-props {
  grid-template-rows: 22fr 103fr 212fr;
}

.scroll-arrows {
  align-content: space-between;
  padding: 6px 0;
}

.scroll-up,
.scroll-down {
  border: 5px solid transparent;
  border-top-width: 0;
  border-bottom: 8px solid #a0a0a0;
}

.scroll-down {
  border-top: 8px solid #a0a0a0;
  border-bottom-width: 0;
}

/* widget box */
.widget-list {
  flex: 1;
  display: flex;
  flex-direction: column;
  justify-content: flex-end;
  overflow: hidden;
}

.widget-list li {
  display: flex;
  align-items: center;
  gap: 6px;
  height: 24px;
  padding-left: 4px;
}

.widget-list li svg {
  width: 22px;
  height: 22px;
}

.category {
  flex: none;
  height: 22px;
  padding-left: 3px;
  background: linear-gradient(#f6f6f6, #e0e0e0);
  border-top: 1px solid #a0a0a0;
  border-bottom: 1px solid #a0a0a0;
}

.category svg {
  width: 10px;
  height: 6px;
}

.category span {
  flex: 1;
}

/* form */
.mdi {
  flex: 1;
  position: relative;
  background: #a0a0a0;
  border: 1px solid #828790;
}

.form-window {
  position: absolute;
  left: 303px;
  top: 170px;
  width: 416px;
  padding: 2px 7px 7px;
  background: linear-gradient(#99b4d1, #b9d1ea 32px, #b9d1ea 40px, #dce8f5 96px, #b9d1ea 98px);
  border: 1px solid #111;
  border-radius: 6px 6px 0 0;
  box-shadow: inset 1px 1px #e8f2fa, inset -1px -1px #35d0e8;
}

.form-head {
  display: flex;
  align-items: center;
  gap: 2px;
  height: 30px;
  padding-left: 2px;
}

.form-logo {
  width: 20px;
  height: 16px;
  margin-top: 6px;
}

.form-ttl {
  flex: 1;
  padding: 7px 0 0 3px;
}

.form-btn {
  width: 41px;
  height: 23px;
  padding-top: 2px;
  background: linear-gradient(#c3d5ea 50%, #9ab6d2 50%, #b4cde5);
  border: 1px solid #5f7690;
  border-radius: 2px;
  box-shadow: inset 0 0 0 1px #dbe7f4;
}

.form-btn svg {
  width: 18px;
  height: 8px;
}

.form-btn-close {
  padding-top: 0;
  background: linear-gradient(#e3a093 50%, #b83c24 50%, #d07560);
  border-color: #4b1420;
  box-shadow: inset 0 0 0 1px #e8b5a8;
}

.form-btn-close svg {
  height: 16px;
}

.form-canvas {
  position: relative;
  height: 300px;
  background: #f0f0f0 conic-gradient(from 270deg at 1px 1px, #a0a0a0 90deg, transparent 0) 0 0 / 10px 10px;
}

.form-label {
  position: absolute;
  left: 161px;
  top: 147px;
  white-space: nowrap;
}

/* tables */
.grid {
  width: 100%;
  table-layout: fixed;
  border-collapse: separate;
  border-spacing: 0;
}

.grid th {
  height: 29px;
  padding: 0 5px;
  text-align: left;
  font-weight: 400;
  white-space: nowrap;
  border-right: 1px solid #e0e0e0;
}

.signals th:last-child {
  border-right: none;
}

.grid td {
  height: 24px;
  padding: 0 3px;
  white-space: nowrap;
}

.col-arrow {
  width: 25px;
}

.col-object {
  width: 70px;
}

.col-prop {
  width: 125px;
}

.col-sender {
  width: 55px;
}

.col-signal {
  width: 40px;
}

.arrow-down {
  width: 10px;
  height: 6px;
}

.arrow-right {
  width: 6px;
  height: 10px;
  margin-left: 6px;
}

.tree .arrow-down {
  margin-left: 3px;
}

.is-selected td + td {
  background: #d9d9d9;
}

.tree .tree-name {
  display: flex;
  align-items: center;
  gap: 5px;
  padding: 0 0 0 2px;
}

.tree-icon {
  width: 22px;
  height: 22px;
}

.tree-child td {
  height: 22px;
  padding-left: 0;
  padding-right: 0;
}

.tree-child td:last-child {
  padding-left: 3px;
  background: #f5f5f5;
}

.tree-child span {
  display: block;
  margin-left: 25px;
  padding: 1px 0 1px 3px;
  background: #f5f5f5;
}

.props td {
  background: #ffffdc;
  border-bottom: 1px solid #d4d4d4;
}

.props td:first-child,
.props .alt td {
  background: #ffffbf;
}

.props td:nth-child(2):not([colspan]) {
  border-right: 1px solid #d4d4d4;
}

.props .orange td {
  background: #fff1de;
}

.props .orange td:first-child {
  background: #ffe4ba;
}

.props .group td {
  padding-left: 0;
  font-weight: 700;
  color: #fff;
  background: #a0a0a0;
}

.props .group td:first-child {
  padding-left: 4px;
}

.is-changed td:nth-child(2) {
  font-weight: 700;
}

.check {
  appearance: none;
  display: block;
  width: 16px;
  height: 16px;
  margin: 0;
  background: #005fb8;
  border-radius: 3px;
}

.check:checked::before {
  content: "";
  display: block;
  width: 8px;
  height: 4px;
  margin: 5px 0 0 4px;
  border: solid #fff;
  border-width: 0 0 1px 1px;
  transform: rotate(-45deg);
}

.value-icon {
  display: inline-block;
  width: 23px;
  padding-left: 2px;
  vertical-align: middle;
}

.value-icon svg {
  width: 10px;
  height: 16px;
  margin-left: 2px;
}

.value-font {
  font-family: "Liberation Serif", serif;
  font-size: 18px;
}

/* property editor */
.prop-tools {
  flex: none;
  display: flex;
  align-items: center;
  height: 42px;
  padding: 2px 0 0 3px;
}

.prop-tools .filter {
  flex: 1;
  min-width: 0;
  margin-top: 2px;
}

.prop-tools button {
  position: relative;
  width: 37px;
  height: 34px;
}

.prop-tools svg {
  width: 22px;
  height: 22px;
}

.has-menu::after {
  content: "";
  position: absolute;
  right: 3px;
  bottom: 3px;
  border: 4px solid transparent;
  border-top-color: #000;
  border-bottom-width: 0;
}

.prop-object {
  flex: none;
  height: 19px;
  margin-bottom: 1px;
  padding-left: 1px;
  font: 13px/19px "Liberation Mono", monospace;
  border: 1px solid #b4b4b4;
  border-right: none;
}

/* signal / slot editor */
.signal-tools {
  flex: none;
  display: flex;
  gap: 9px;
  height: 34px;
  padding: 8px 0 0 5px;
}

.signal-tools svg {
  width: 20px;
  height: 20px;
}

.signal-tools button {
  height: 20px;
}

.is-sorted {
  position: relative;
}

.sort-mark {
  position: absolute;
  left: 22px;
  top: 0;
  width: 10px;
  height: 6px;
}

.tabs {
  flex: none;
  display: flex;
  align-items: flex-start;
  height: 23px;
}

.tab {
  height: 21px;
  padding: 0 14px;
  background: #f3f3f3;
  border: solid #e2e2e2;
  border-width: 0 1px 1px 0;
}

.tab.is-active {
  height: 22px;
  padding: 0 16px;
  background: #f9f9f9;
}

.statusbar {
  flex: none;
  height: 20px;
}
```
